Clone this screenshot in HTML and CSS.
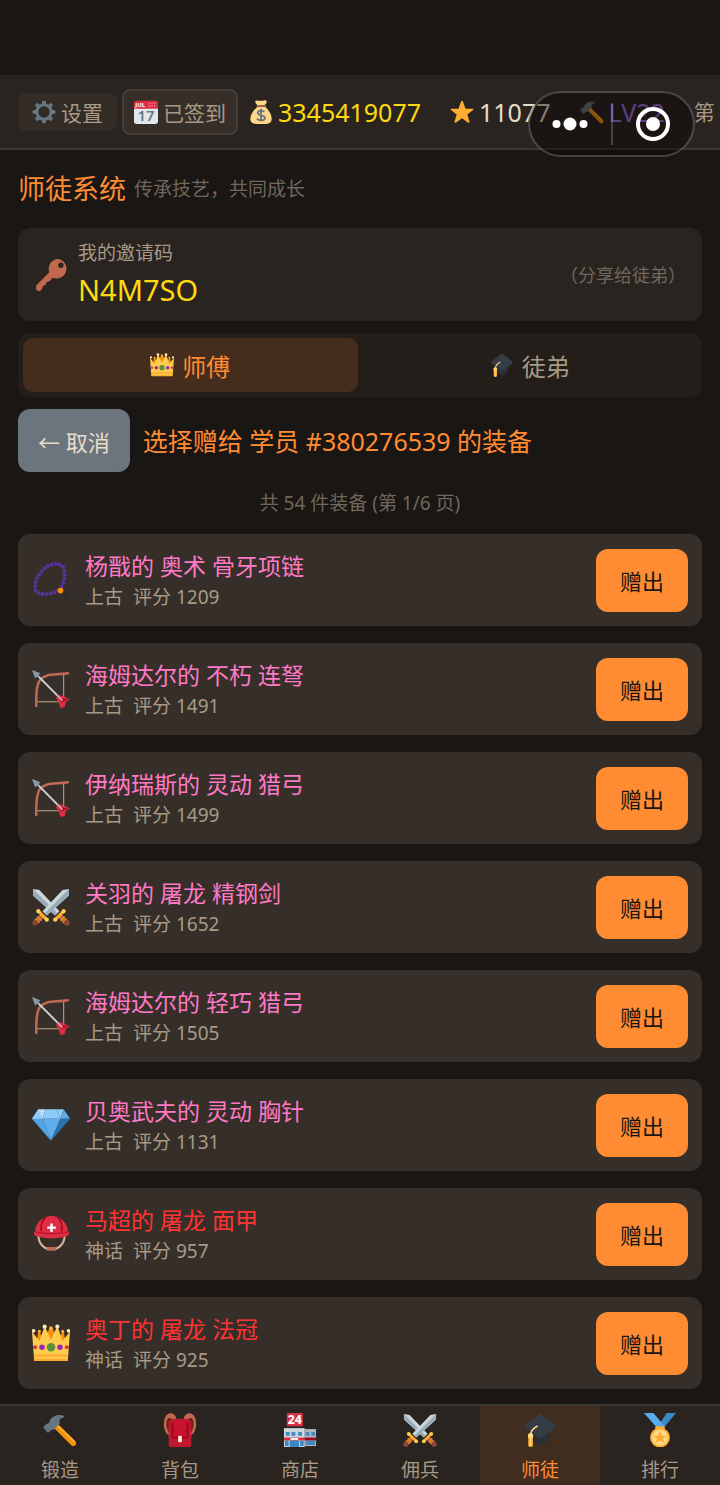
FILE: index.html
```html
<!DOCTYPE html>
<html lang="zh-CN">
<head>
    <meta charset="UTF-8">
    <meta name="viewport" content="width=device-width, initial-scale=1.0">
    <title>师徒系统</title>
    <link rel="stylesheet" href="styles.css">
</head>
<body>
    <!-- icon sprite -->
    <svg class="sprite" aria-hidden="true">
        <symbol id="gear" viewBox="0 0 36 36">
            <g fill="#66757F">
                <g id="teeth"><rect x="15" y="1" width="6" height="34" rx="2"/><rect x="1" y="15" width="34" height="6" rx="2"/></g>
                <use href="#teeth" transform="rotate(45 18 18)"/>
            </g>
            <circle cx="18" cy="18" r="10.5" fill="none" stroke="#66757F" stroke-width="5"/>
            <circle cx="18" cy="18" r="8.5" fill="#332b26"/>
        </symbol>
        <symbol id="calendar" viewBox="0 0 36 36">
            <path fill="#E1E8ED" d="M0 11h36v21a4 4 0 0 1-4 4H4a4 4 0 0 1-4-4z"/>
            <path fill="#DD2E44" d="M0 13V5a4 4 0 0 1 4-4h28a4 4 0 0 1 4 4v8z"/>
            <g fill="#F4ABBA"><circle cx="23" cy="5" r="1"/><circle cx="27" cy="5" r="1"/><circle cx="31" cy="5" r="1"/><circle cx="23" cy="9" r="1"/><circle cx="27" cy="9" r="1"/><circle cx="31" cy="9" r="1"/></g>
            <text x="2" y="11" class="cal-month">JUL</text>
            <text x="18" y="32" class="cal-day">17</text>
        </symbol>
        <symbol id="moneybag" viewBox="0 0 36 36">
            <path fill="#FDD888" d="M13 10h11c6 5 10 12 10 18 0 7-5 8-16 8S2 35 2 28c0-7 5-13 11-18z"/>
            <path fill="#FDD888" d="M10 1c3-1 4 1 8 0 4 1 6-2 8 0s-1 5-3 7H13c-2-2-5-5-3-7z"/>
            <path stroke="#BF6952" stroke-width="2" stroke-linecap="round" d="M12 9h13"/>
            <path fill="none" stroke="#67757F" stroke-width="2.8" d="M23 18c-2-3-9-3-10 1 0 5 11 3 11 8 0 4-9 5-12 1M18 13v19"/>
        </symbol>
        <symbol id="star" viewBox="0 0 36 36">
            <path fill="#FFAC33" d="M18 1q1 0 1.500 1.500l3.800 10.500h11q1.500.300.700 1.700l-9 7 3.300 11q0 2-2 1.300L18 27.500 8.700 34q-2 .700-2-1.300l3.300-11-9-7q-.800-1.400.700-1.700h11l3.800-10.500Q17 1 18 1z"/>
        </symbol>
        <symbol id="hammer" viewBox="0 0 36 36">
            <path stroke="#F4900C" stroke-width="6" stroke-linecap="round" d="M14 14l18 18"/>
            <path stroke="#FFAC33" stroke-width="2" stroke-linecap="round" d="M16 14l17 16"/>
            <path fill="#66757F" d="M1 14l3-3c2 1 3-1 3-3 3-5 9-7 15-5 1 1 0 2-1 2-4 1-4 3-3 6l-7 7c-2-1-3 0-4 2l-2 1-5-6z"/>
        </symbol>
        <symbol id="key" viewBox="0 0 36 36">
            <path fill="#C1694F" d="M25 0a11 11 0 0 0-10 15L1 29c-2 2-1 6 1 7 3 1 4-1 5-3l1-3 3-1 1-3 3-1 4-4A11 11 0 1 0 25 0z"/>
            <circle cx="28" cy="7" r="3" fill="#292420"/>
        </symbol>
        <symbol id="crown" viewBox="0 0 36 36">
            <path fill="#F4900C" d="M4 19L6 6l5 8 7-12 7 12 5-8 2 13z"/>
            <path fill="#FFCC4D" d="M2 34L0 7l7 9 5-14 6 13 6-13 5 14 7-9-2 27z"/>
            <path fill="#FFAC33" d="M2 29h32v2H2zM2 33h32v2H2z"/>
            <g fill="#FFE8B6"><circle cx="1.5" cy="6.5" r="1.7"/><circle cx="12" cy="2.5" r="2"/><circle cx="24" cy="2.5" r="2"/><circle cx="34.5" cy="6.5" r="1.7"/></g>
            <g fill="#FFAC33"><circle cx="7" cy="7" r="1.5"/><circle cx="18" cy="4" r="1.8"/><circle cx="29" cy="7" r="1.5"/></g>
            <circle cx="18" cy="22" r="4" fill="#5C913B"/>
            <g fill="#9B26B6"><circle cx="9.5" cy="22" r="2.6"/><circle cx="26.5" cy="22" r="2.6"/></g>
            <g fill="#DD2E44"><circle cx="3" cy="22" r="1.8"/><circle cx="33" cy="22" r="1.8"/></g>
        </symbol>
        <symbol id="cap" viewBox="0 0 36 36">
            <path fill="#292F33" d="M10 19v8c2 5 7 7 10 7 4 0 7-6 8-14z"/>
            <path fill="#343c45" d="M18 1Q19 1 20 2l14 11q1 1 0 2L21 26q-2 1-4 0L2 15q-1-1 0-2L16 2q1-1 2-1z"/>
            <path fill="none" stroke="#FFD983" stroke-width="1.6" stroke-linecap="round" d="M15 14c-4 2-7 5-7 10"/>
            <path fill="#FFAC33" d="M5.500 25h5V35q-2.500 2-5 0z"/>
            <circle cx="8" cy="24" r="2.8" fill="#FFD983"/>
            <path stroke="#FFD983" stroke-width="1.3" d="M8 27v8"/>
        </symbol>
        <symbol id="beads" viewBox="0 0 36 36">
            <path fill="none" stroke="#573399" stroke-width="3.8" stroke-linecap="round" stroke-dasharray="0 3.9" d="M25 28C18 32 9 33 4 29 1 24 4 14 11 8c6-6 14-7 18-3 3 5 3 14-3 23"/>
            <path fill="#302b2b" d="M28 29l4 0 4 5-3 3-4-3z"/>
            <circle cx="27" cy="28" r="2.7" fill="#F4900C"/>
        </symbol>
        <symbol id="bow" viewBox="0 0 36 36">
            <path fill="none" stroke="#C1A27C" stroke-width="1" d="M30 4v23l-3 3H4"/>
            <path fill="none" stroke="#BF6952" stroke-width="2.4" stroke-linecap="round" d="M4 34C4 23 4 14 8 9 13 3 22 5 34 3"/>
            <path stroke="#CCD6DD" stroke-width="1.8" d="M3 3l25 25"/>
            <path fill="#8899A6" d="M0 0l8 3-2 2 1 1-1 1-1-1-2 2z"/>
            <path fill="#DD2E44" d="M24 23l6 2 6 3-4 2-1 5-4 1-2-6-2-3z"/>
            <path fill="#A0041E" d="M28 27l7 1-4 1-3 2z"/>
            <path stroke="#CCD6DD" stroke-width="1.2" d="M24 24l5 5"/>
        </symbol>
        <symbol id="sword" viewBox="0 0 36 36">
            <path fill="#CCD6DD" d="M1 1l6 1 19 20-4 4L1 7z"/>
            <path fill="#9aabb8" d="M1 1l23 23-2 2L1 7z"/>
            <path stroke="#BF6952" stroke-width="4.5" d="M26 26l6 6"/>
            <path stroke="#F4900C" stroke-width="1.2" d="M27 31l4-4M29 33l4-4"/>
            <path stroke="#FFAC33" stroke-width="3" stroke-linecap="round" d="M22.500 29.500l7-7"/>
            <circle cx="30" cy="22" r="2" fill="#FFCC4D"/><circle cx="22" cy="30" r="2" fill="#FFCC4D"/>
            <circle cx="33" cy="33" r="2.7" fill="#8A4633"/>
        </symbol>
        <symbol id="swords" viewBox="0 0 36 36">
            <use href="#sword" width="36" height="36"/>
            <use href="#sword" width="36" height="36" transform="translate(36 0) scale(-1 1)"/>
        </symbol>
        <symbol id="gem" viewBox="0 0 36 36">
            <path fill="#BDDDF4" d="M6 3h7l-3 9H0z"/>
            <path fill="#8CCAF7" d="M13 3h10l4 9H10z"/>
            <path fill="#8CCAF7" d="M6 3l4 9H0zM23 3h7l-3 9z"/>
            <path fill="#5DADEC" d="M30 3l6 9h-9z"/>
            <path fill="#50A5E6" d="M0 12h10l8 21z"/>
            <path fill="#5DADEC" d="M10 12h17l-9 21z"/>
            <path fill="#2a74ad" d="M27 12h9L18 33z"/>
        </symbol>
        <symbol id="helmet" viewBox="0 0 36 36">
            <path fill="none" stroke="#D9B79C" stroke-width="2" d="M6 19c0 18 25 18 25 0"/>
            <path fill="none" stroke="#BF6952" stroke-width="3.5" d="M14 32h9"/>
            <path fill="#DD2E44" d="M3 18C2 8 10 1 18.500 1S35 8 34 18z"/>
            <path fill="none" stroke="#A0041E" stroke-width="1.4" d="M13 2C9 5 8 11 9 17M24 2c4 3 5 9 4 15"/>
            <path fill="#DD2E44" d="M2 16c8-1 25-1 33 0q1 3-2 4c-8 3-21 3-29 0q-3-1-2-4z"/>
            <path fill="none" stroke="#BE1931" stroke-width="1.4" d="M3 16c9 2 22 2 31 0"/>
            <path stroke="#fff" stroke-width="2.2" d="M18.500 8v8M14.500 12h8"/>
        </symbol>
        <symbol id="backpack" viewBox="0 0 36 36">
            <path fill="#C1694F" d="M2 5c3-7 11-6 12 1v4L8 25C2 22-1 14 2 5zM34 5c-3-7-11-6-12 1v4l6 15c6-3 9-11 6-20z"/>
            <path fill="#662113" d="M4 8c2-4 5-3 6 0L8 22C4 19 3 13 4 8zM32 8c-2-4-5-3-6 0l2 14c4-3 5-9 4-14z"/>
            <path fill="#BE1931" d="M6 11q0-5 6-5h12q6 0 6 5v22q0 3-3 3H9q-3 0-3-3z"/>
            <path fill="#A0041E" d="M9 10h18v15q0 2-2 2H11q-2 0-2-2z"/>
            <path fill="#C8132F" d="M11 8h14v17H11z"/>
            <rect x="16" y="24" width="4" height="7" rx="1" fill="#FFE8D6"/>
        </symbol>
        <symbol id="store" viewBox="0 0 36 36">
            <rect x="4" y="0" width="17" height="14" rx="1" fill="#DD2E44"/>
            <text x="12.500" y="11.500" class="store-sign">24</text>
            <path fill="#CCD6DD" d="M1 16h22v20H1z"/>
            <path fill="#AAB8C2" d="M23 17h12v18H23z"/>
            <g fill="#4289C1"><path d="M3 20h4v4H3zM9 20h4v4H9zM16 20h4v4h-4zM24 20h4v4h-4zM30 20h4v4h-4z"/><path d="M2 29h4v6H2zM18 29h4v6h-4zM24 29h10v5H24z"/></g>
            <path fill="#3B88C3" d="M7 29h10v7H7z"/>
            <path fill="#DD2E44" d="M1 26h22v3H1z"/><path fill="#A0041E" d="M23 26h12v3H23z"/>
            <path stroke="#fff" stroke-width="2" d="M8 27.500h8"/>
        </symbol>
        <symbol id="medal" viewBox="0 0 36 36">
            <path fill="#3B88C3" d="M25 0h10L21 17h-7z"/>
            <path fill="#55ACEE" d="M1 0h10l12 14-7 3z"/>
            <rect x="13" y="14" width="10" height="4" rx="1" fill="#FFAC33"/>
            <circle cx="18" cy="26" r="10.5" fill="#FFAC33"/>
            <circle cx="18" cy="26" r="8.5" fill="#FFD983"/>
            <path fill="#FFAC33" d="M18 19l2 5h5l-4 3 2 5-5-3-5 3 2-5-4-3h5z"/>
        </symbol>
        <symbol id="more" viewBox="0 0 36 16">
            <g fill="#fff"><circle cx="4.5" cy="8" r="4"/><circle cx="18" cy="8" r="6.5"/><circle cx="31.5" cy="8" r="4"/></g>
        </symbol>
        <symbol id="target" viewBox="0 0 36 36">
            <circle cx="18" cy="18" r="15" fill="none" stroke="#fff" stroke-width="4"/>
            <circle cx="18" cy="18" r="7" fill="#fff"/>
        </symbol>
    </svg>

    <header class="topbar">
        <button class="chip"><svg class="icon"><use href="#gear"/></svg>设置</button>
        <button class="chip chip-outline"><svg class="icon"><use href="#calendar"/></svg>已签到</button>
        <div class="stats">
            <span class="stat gold"><svg class="icon"><use href="#moneybag"/></svg>3345419077</span>
            <span class="stat"><svg class="icon"><use href="#star"/></svg>11077</span>
            <span class="stat level"><svg class="icon"><use href="#hammer"/></svg>LV22</span>
            <span class="stage">第</span>
        </div>
    </header>

    <div class="capsule">
        <button class="capsule-btn" aria-label="更多"><svg class="more"><use href="#more"/></svg></button>
        <button class="capsule-btn" aria-label="关闭"><svg class="target"><use href="#target"/></svg></button>
    </div>

    <main class="content">
        <div class="page-title">
            <h1>师徒系统</h1>
            <p>传承技艺，共同成长</p>
        </div>

        <section class="invite">
            <svg class="invite-icon"><use href="#key"/></svg>
            <div class="invite-info">
                <div class="invite-label">我的邀请码</div>
                <div class="invite-code">N4M7SO</div>
            </div>
            <span class="invite-hint">（分享给徒弟）</span>
        </section>

        <div class="tabs">
            <button class="tab active"><svg class="icon"><use href="#crown"/></svg>师傅</button>
            <button class="tab"><svg class="icon"><use href="#cap"/></svg>徒弟</button>
        </div>

        <div class="select-bar">
            <button class="btn btn-cancel">← 取消</button>
            <h2>选择赠给 学员 #380276539 的装备</h2>
        </div>

        <p class="count">共 54 件装备 (第 1/6 页)</p>

        <ul class="items">
            <li class="item">
                <svg class="item-icon"><use href="#beads"/></svg>
                <div class="item-info">
                    <div class="item-name">杨戬的 奥术 骨牙项链</div>
                    <div class="item-meta"><span>上古</span><span>评分 1209</span></div>
                </div>
                <button class="btn btn-give">赠出</button>
            </li>
            <li class="item">
                <svg class="item-icon"><use href="#bow"/></svg>
                <div class="item-info">
                    <div class="item-name">海姆达尔的 不朽 连弩</div>
                    <div class="item-meta"><span>上古</span><span>评分 1491</span></div>
                </div>
                <button class="btn btn-give">赠出</button>
            </li>
            <li class="item">
                <svg class="item-icon"><use href="#bow"/></svg>
                <div class="item-info">
                    <div class="item-name">伊纳瑞斯的 灵动 猎弓</div>
                    <div class="item-meta"><span>上古</span><span>评分 1499</span></div>
                </div>
                <button class="btn btn-give">赠出</button>
            </li>
            <li class="item">
                <svg class="item-icon"><use href="#swords"/></svg>
                <div class="item-info">
                    <div class="item-name">关羽的 屠龙 精钢剑</div>
                    <div class="item-meta"><span>上古</span><span>评分 1652</span></div>
                </div>
                <button class="btn btn-give">赠出</button>
            </li>
            <li class="item">
                <svg class="item-icon"><use href="#bow"/></svg>
                <div class="item-info">
                    <div class="item-name">海姆达尔的 轻巧 猎弓</div>
                    <div class="item-meta"><span>上古</span><span>评分 1505</span></div>
                </div>
                <button class="btn btn-give">赠出</button>
            </li>
            <li class="item">
                <svg class="item-icon"><use href="#gem"/></svg>
                <div class="item-info">
                    <div class="item-name">贝奥武夫的 灵动 胸针</div>
                    <div class="item-meta"><span>上古</span><span>评分 1131</span></div>
                </div>
                <button class="btn btn-give">赠出</button>
            </li>
            <li class="item">
                <svg class="item-icon"><use href="#helmet"/></svg>
                <div class="item-info">
                    <div class="item-name mythic">马超的 屠龙 面甲</div>
                    <div class="item-meta"><span>神话</span><span>评分 957</span></div>
                </div>
                <button class="btn btn-give">赠出</button>
            </li>
            <li class="item">
                <svg class="item-icon"><use href="#crown"/></svg>
                <div class="item-info">
                    <div class="item-name mythic">奥丁的 屠龙 法冠</div>
                    <div class="item-meta"><span>神话</span><span>评分 925</span></div>
                </div>
                <button class="btn btn-give">赠出</button>
            </li>
        </ul>
    </main>

    <nav class="bottom-nav">
        <a href="#forge"><svg class="nav-icon"><use href="#hammer"/></svg>锻造</a>
        <a href="#bag"><svg class="nav-icon"><use href="#backpack"/></svg>背包</a>
        <a href="#shop"><svg class="nav-icon"><use href="#store"/></svg>商店</a>
        <a href="#mercenary"><svg class="nav-icon"><use href="#swords"/></svg>佣兵</a>
        <a href="#mentor" class="active"><svg class="nav-icon"><use href="#cap"/></svg>师徒</a>
        <a href="#rank"><svg class="nav-icon"><use href="#medal"/></svg>排行</a>
    </nav>
</body>
</html>
```

FILE: styles.css
```css
* {
    box-sizing: border-box;
}
body {
    margin: 0;
    padding-top: 75px;
    min-height: 100vh;
    display: flex;
    flex-direction: column;
    background: #1a1613;
    color: #e8dcc8;
    font-family: "Noto Sans", "Noto Sans CJK SC", sans-serif;
    font-size: 19px;
    line-height: 28px;
}
h1, h2, p, ul {
    margin: 0;
    padding: 0;
    font-weight: 400;
}
button {
    font-family: inherit;
    border: none;
    cursor: pointer;
}
svg {
    display: block;
    flex-shrink: 0;
}
.sprite {
    display: none;
}
.icon {
    width: 24px;
    height: 24px;
}
.cal-month {
    font-size: 9px;
    font-weight: 700;
    fill: #fff;
}
.cal-day {
    font-size: 22px;
    font-weight: 600;
    text-anchor: middle;
    fill: #66757f;
}
.store-sign {
    font-size: 13px;
    font-weight: 800;
    text-anchor: middle;
    fill: #fff;
}

/* top bar */
.topbar {
    display: flex;
    align-items: center;
    gap: 5px;
    height: 75px;
    padding: 0 0 0 18px;
    background: #292420;
    border-bottom: 2px solid #3d3731;
    overflow: hidden;
    white-space: nowrap;
}
.chip {
    display: flex;
    align-items: center;
    gap: 5px;
    flex-shrink: 0;
    height: 38px;
    padding: 0 14px;
    border-radius: 8px;
    background: #332b26;
    color: #a89a86;
    font-size: 21px;
}
.chip-outline {
    height: 46px;
    padding: 0 10px;
    background: #362f29;
    border: 2px solid #443d37;
}
.stats {
    display: flex;
    align-items: center;
    gap: 29px;
    margin-left: 6px;
    font-size: 25px;
}
.stat {
    display: flex;
    align-items: center;
    gap: 5px;
}
.gold {
    color: #ffd90f;
}
.level {
    color: #a070e8;
}
.stage {
    color: #a89a86;
    font-size: 21px;
}

/* floating capsule */
.capsule {
    position: absolute;
    top: 91px;
    right: 25px;
    display: flex;
    align-items: center;
    width: 167px;
    height: 66px;
    border: 2px solid rgba(255, 255, 255, 0.22);
    border-radius: 33px;
    background: rgba(8, 4, 2, 0.45);
}
.capsule-btn {
    display: flex;
    flex: 1;
    align-items: center;
    justify-content: center;
    height: 42px;
    padding: 0;
    background: none;
}
.capsule-btn + .capsule-btn {
    border-left: 2px solid rgba(255, 255, 255, 0.2);
}
.more {
    width: 36px;
    height: 16px;
}
.target {
    width: 36px;
    height: 36px;
}

/* content */
.content {
    flex: 1;
    display: flex;
    flex-direction: column;
    padding: 20px 18px 15px;
}
.page-title {
    display: flex;
    align-items: center;
    gap: 8px;
    height: 38px;
    margin-bottom: 20px;
}
.page-title h1 {
    color: #ff8c32;
    font-size: 27px;
}
.page-title p {
    color: #70675d;
}
.invite {
    display: flex;
    align-items: center;
    gap: 10px;
    min-height: 93px;
    padding: 10px 16px 10px 18px;
    margin-bottom: 12px;
    border-radius: 12px;
    background: #29241f;
}
.invite-icon {
    width: 32px;
    height: 32px;
}
.invite-info {
    flex: 1;
}
.invite-label {
    color: #a89a86;
    line-height: 30px;
}
.invite-code {
    color: #ffd90f;
    font-size: 29px;
    line-height: 43px;
}
.invite-hint {
    color: #70675d;
    font-size: 18px;
}
.tabs {
    display: flex;
    gap: 5px;
    padding: 5px;
    margin-bottom: 12px;
    border-radius: 12px;
    background: #231e1a;
}
.tab {
    display: flex;
    flex: 1;
    align-items: center;
    justify-content: center;
    gap: 8px;
    height: 54px;
    border-radius: 10px;
    background: none;
    color: #a89a86;
    font-size: 24px;
}
.tab.active {
    background: #452d1d;
    color: #ff8c32;
}
.select-bar {
    display: flex;
    align-items: center;
    gap: 13px;
    margin-bottom: 17px;
}
.select-bar h2 {
    color: #ff8c32;
    font-size: 25px;
}
.btn {
    flex-shrink: 0;
    height: 63px;
    padding: 0 24px;
    border-radius: 12px;
    font-size: 22px;
}
.btn-cancel {
    padding: 0 20px;
    background: #6c757d;
    color: #e8dcc8;
}
.btn-give {
    background: #ff8c32;
    color: #1a1613;
}
.count {
    margin-bottom: 17px;
    color: #70675d;
    text-align: center;
}
.items {
    display: flex;
    flex-direction: column;
    gap: 17px;
    list-style: none;
}
.item {
    display: flex;
    align-items: center;
    gap: 15px;
    min-height: 92px;
    padding: 0 14px;
    border-radius: 12px;
    background: #362f29;
}
.item-icon {
    width: 38px;
    height: 38px;
}
.item-info {
    flex: 1;
}
.item-name {
    color: #ff79c6;
    font-size: 23px;
    line-height: 34px;
}
.item-name.mythic {
    color: #ff3333;
}
.item-meta {
    display: flex;
    gap: 10px;
    color: #a89a86;
}

/* bottom nav */
.bottom-nav {
    position: sticky;
    bottom: 0;
    display: flex;
    height: 81px;
    background: #292420;
    border-top: 2px solid #3d3731;
}
.bottom-nav a {
    display: flex;
    flex: 1;
    flex-direction: column;
    align-items: center;
    gap: 9px;
    padding-top: 7px;
    color: #a89a86;
    text-decoration: none;
}
.bottom-nav a.active {
    background: #402d20;
    color: #ff8c32;
}
.nav-icon {
    width: 34px;
    height: 34px;
}
```
